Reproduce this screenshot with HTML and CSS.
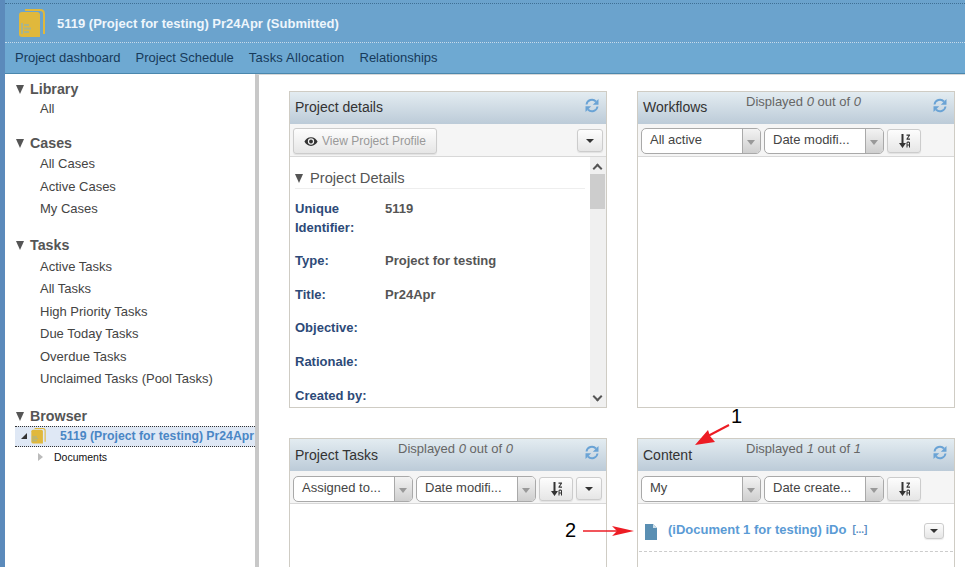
FILE: index.html
```html
<!DOCTYPE html>
<html lang="en">
<head>
  <meta charset="UTF-8">
  <title>5119 (Project for testing) Pr24Apr</title>
  <link rel="stylesheet" href="styles.css">
</head>
<body>
  <svg class="defs" width="0" height="0" aria-hidden="true">
    <symbol id="refresh" viewBox="0 0 14 15">
      <path d="M1.500 6.500A5.500 5.500 0 0 1 11 3.500" stroke="#6aa3d5" stroke-width="1.900" fill="none"/>
      <path d="M13.500 1V6.800H7.800Z" fill="#6aa3d5"/>
      <path d="M12.500 8.500A5.500 5.500 0 0 1 3 11.500" stroke="#6aa3d5" stroke-width="1.900" fill="none"/>
      <path d="M.5 14V8.200H6.200Z" fill="#6aa3d5"/>
    </symbol>
    <symbol id="sort" viewBox="0 0 11 14">
      <path d="M2.500 0H4.500V9H7L3.500 14L0 9H2.500Z" fill="#333"/>
      <path d="M7.500 .5H11V1.500L8.900 4.600H11V5.800H7.500V4.800L9.600 1.700H7.500ZM7.500 13.500V8.500L8.500 7.500H10L11 8.500V13.500H10V11.500H8.500V13.500ZM8.500 8.700V10.400H10V8.700Z" fill="#333"/>
    </symbol>
    <symbol id="project" viewBox="0 0 26 29">
      <path d="M6 1H21Q25 1 25 5V25" stroke="#e0b83c" stroke-width="2" fill="none"/>
      <path d="M3 3H18Q21 3 21 6V28H3Q0 28 0 25V6Q0 3 3 3Z" fill="#e0b83c"/>
      <path d="M2 14H4V25H2ZM5 15H10V17H5ZM5 18.500H12V20.500H5ZM5 22H10V24H5Z" fill="#a9b48c"/>
    </symbol>
  </svg>

  <header class="topbar">
    <div class="titlebar">
      <svg class="title-icon"><use href="#project"/></svg>
      <h1>5119 (Project for testing) Pr24Apr (Submitted)</h1>
    </div>
    <nav class="tabs">
      <a href="#">Project dashboard</a>
      <a href="#">Project Schedule</a>
      <a href="#" class="tab-wide">Tasks Allocation</a>
      <a href="#">Relationships</a>
    </nav>
  </header>

  <div class="layout">
    <aside class="sidebar">
      <section class="group">
        <h3><span class="caret"></span>Library</h3>
        <ul class="tight">
          <li>All</li>
        </ul>
      </section>
      <section class="group">
        <h3><span class="caret"></span>Cases</h3>
        <ul>
          <li>All Cases</li>
          <li>Active Cases</li>
          <li>My Cases</li>
        </ul>
      </section>
      <section class="group group-tasks">
        <h3><span class="caret"></span>Tasks</h3>
        <ul>
          <li>Active Tasks</li>
          <li>All Tasks</li>
          <li>High Priority Tasks</li>
          <li>Due Today Tasks</li>
          <li>Overdue Tasks</li>
          <li>Unclaimed Tasks (Pool Tasks)</li>
        </ul>
      </section>
      <section class="group browser">
        <h3><span class="caret"></span>Browser</h3>
        <div class="tree-selected">
          <span class="tree-open"></span>
          <svg class="tree-icon"><use href="#project"/></svg>
          <span class="tree-label">5119 (Project for testing) Pr24Apr</span>
        </div>
        <div class="tree-row">
          <span class="tree-closed"></span>
          <span>Documents</span>
        </div>
      </section>
    </aside>

    <main class="dashboard">
      <section class="panel">
        <div class="panel-head">
          <h2>Project details</h2>
          <svg class="refresh"><use href="#refresh"/></svg>
        </div>
        <div class="panel-tools">
          <button class="btn btn-view">
            <svg class="eye" viewBox="0 0 16 12"><path d="M8 1C4.500 1 1.800 3.300 .5 6C1.800 8.700 4.500 11 8 11S14.200 8.700 15.500 6C14.200 3.300 11.500 1 8 1ZM8 9.600A3.600 3.600 0 1 1 8 2.400A3.600 3.600 0 0 1 8 9.600Z" fill="#333"/><circle cx="8" cy="6" r="2.200" fill="#333"/></svg>
            View Project Profile
          </button>
          <button class="btn btn-menu push"><span class="down"></span></button>
        </div>
        <div class="details">
          <div class="details-body">
            <h4><span class="caret"></span>Project Details</h4>
            <dl>
              <dt class="first">Unique Identifier:</dt><dd class="first">5119</dd>
              <dt class="row">Type:</dt><dd class="row">Project for testing</dd>
              <dt class="row">Title:</dt><dd class="row">Pr24Apr</dd>
              <dt class="row">Objective:</dt><dd class="row"></dd>
              <dt class="row">Rationale:</dt><dd class="row"></dd>
              <dt>Created by:</dt><dd></dd>
            </dl>
          </div>
          <div class="scrollbar">
            <span class="arrow-up"></span>
            <span class="thumb"></span>
            <span class="arrow-down"></span>
          </div>
        </div>
      </section>

      <section class="panel">
        <div class="panel-head">
          <h2>Workflows</h2>
          <p class="count">Displayed <em>0</em> out of <em>0</em></p>
          <svg class="refresh"><use href="#refresh"/></svg>
        </div>
        <div class="panel-tools">
          <div class="select"><span>All active</span><i></i></div>
          <div class="select"><span>Date modifi...</span><i></i></div>
          <button class="btn btn-sort"><svg><use href="#sort"/></svg></button>
        </div>
      </section>

      <section class="panel">
        <div class="panel-head">
          <h2>Project Tasks</h2>
          <p class="count">Displayed <em>0</em> out of <em>0</em></p>
          <svg class="refresh"><use href="#refresh"/></svg>
        </div>
        <div class="panel-tools">
          <div class="select"><span>Assigned to...</span><i></i></div>
          <div class="select"><span>Date modifi...</span><i></i></div>
          <button class="btn btn-sort"><svg><use href="#sort"/></svg></button>
          <button class="btn btn-menu"><span class="down"></span></button>
        </div>
      </section>

      <section class="panel">
        <div class="panel-head">
          <h2>Content</h2>
          <p class="count">Displayed <em>1</em> out of <em>1</em></p>
          <svg class="refresh"><use href="#refresh"/></svg>
        </div>
        <div class="panel-tools">
          <div class="select"><span>My</span><i></i></div>
          <div class="select"><span>Date create...</span><i></i></div>
          <button class="btn btn-sort"><svg><use href="#sort"/></svg></button>
        </div>
        <div class="doc-row">
          <svg class="doc-icon" viewBox="0 0 12 16"><path d="M0 0H8L12 4V16H0Z" fill="#5a8fb3"/><path d="M8 0L12 4H8Z" fill="#cfe0ea"/></svg>
          <a href="#" class="doc-link">(iDocument 1 for testing) iDo</a>
          <a href="#" class="doc-more">[...]</a>
          <button class="btn doc-menu"><span class="down"></span></button>
        </div>
      </section>
    </main>
  </div>

  <!-- red annotation arrows drawn over the screenshot -->
  <span class="mark mark-1">1</span>
  <span class="mark mark-2">2</span>
  <svg class="arrows" width="965" height="567" viewBox="0 0 965 567">
    <path d="M729 425L708 436" stroke="#ed1c24" stroke-width="2" fill="none"/>
    <path d="M695 445L708 430L710 436L715 442Z" fill="#ed1c24"/>
    <path d="M583 531H620" stroke="#ed1c24" stroke-width="1.500" fill="none"/>
    <path d="M634 531L612 526L617 531L612 536Z" fill="#ed1c24"/>
  </svg>
</body>
</html>
```

FILE: styles.css
```css
/* page frame */
html, body {
  margin: 0;
  height: 567px;
  overflow: hidden;
}
body {
  position: relative;
  font-family: "Liberation Sans", Arial, sans-serif;
  font-size: 13px;
  color: #444;
  background: #fff;
  border-left: 5px solid #5b8abb;
}
.defs {
  position: absolute;
}

/* top bar */
.topbar {
  background: #6ba3cd;
  border-bottom: 1px solid #4a87ad;
  padding-top: 3px;
}
.titlebar {
  display: flex;
  align-items: center;
  height: 38px;
  border-top: 1px dotted #3f6f94;
  border-bottom: 1px dotted #c6dcec;
  padding-left: 14px;
}
.title-icon {
  width: 26px;
  height: 29px;
  margin-right: 12px;
}
.titlebar h1 {
  margin: 0;
  font-size: 13px;
  font-weight: bold;
  color: #eef6fc;
}
.tabs {
  display: flex;
  gap: 15px;
  padding: 6px 0 0 10px;
  height: 24px;
  background: #6ea9d2;
}
.tabs a {
  color: #173a5a;
  text-decoration: none;
  font-size: 13px;
  line-height: 17px;
}
.tabs .tab-wide {
  letter-spacing: .2px;
}

.layout {
  display: flex;
  height: 493px;
}

/* left navigation */
.sidebar {
  width: 250px;
  flex: none;
  padding: 7px 0 0 11px;
  box-sizing: border-box;
  overflow: hidden;
}
.group {
  padding-bottom: 16px;
}
.group h3 {
  margin: 0;
  font-size: 14.250px;
  line-height: 17px;
  font-weight: bold;
  color: #555;
}
.caret {
  display: inline-block;
  width: 0;
  height: 0;
  border-left: 4.500px solid transparent;
  border-right: 4.500px solid transparent;
  border-top: 9px solid #555;
  margin-right: 6px;
}
.group ul {
  list-style: none;
  margin: 1px 0 0;
  padding: 0 0 0 24px;
}
.group li {
  line-height: 22.500px;
  color: #444;
}
.group ul.tight {
  margin: 1px 0;
}
.group ul.tight li {
  line-height: 19px;
}
.group-tasks ul {
  margin-top: 2px;
}
.browser {
  padding: 1px 0 0;
}
.browser h3 {
  margin-bottom: 1px;
}
.tree-selected {
  display: flex;
  align-items: center;
  height: 19px;
  margin-left: -1px;
  background: #dfe8f5;
  border-top: 1px dotted #333;
  border-bottom: 1px dotted #333;
}
.tree-open {
  width: 0;
  height: 0;
  margin-left: 6px;
  border-bottom: 6px solid #333;
  border-left: 6px solid transparent;
}
.tree-icon {
  width: 15px;
  height: 16px;
  margin-left: 4px;
}
.tree-label {
  margin-left: 14px;
  font-size: 12.250px;
  font-weight: bold;
  color: #4a86c5;
  white-space: nowrap;
}
.tree-row {
  display: flex;
  align-items: center;
  height: 20px;
  font-size: 10.500px;
  color: #111;
  padding-left: 22px;
}
.tree-closed {
  width: 0;
  height: 0;
  margin-right: 11px;
  border-top: 4px solid transparent;
  border-bottom: 4px solid transparent;
  border-left: 5px solid #bbb;
}

/* dashboard */
.dashboard {
  flex: 1;
  border-left: 4px solid #c8c8c8;
  border-top: 1px solid #d8d8d8;
  padding: 16px 0 0 30px;
  display: grid;
  grid-template-columns: 318px 318px;
  grid-template-rows: 317px 317px;
  gap: 30px;
}
.panel {
  border: 1px solid #cfccc4;
  box-sizing: border-box;
  background: #fff;
  display: flex;
  flex-direction: column;
}
.panel-head {
  position: relative;
  display: flex;
  align-items: center;
  height: 32px;
  flex: none;
  padding: 0 5px;
  background: linear-gradient(#e3ecf1, #bccbd8);
  box-sizing: border-box;
}
.panel-head h2 {
  margin: -2px 0 0;
  font-size: 14px;
  font-weight: normal;
  color: #333;
}
.panel:nth-child(n+3) .panel-head h2 {
  margin-top: 0;
}
.count {
  position: absolute;
  top: 2px;
  left: 108px;
  margin: 0;
  font-size: 13px;
  color: #666;
}
.refresh {
  position: absolute;
  right: 7px;
  top: 6px;
  width: 14px;
  height: 15px;
}
.panel-tools {
  display: flex;
  align-items: flex-start;
  gap: 3px;
  height: 33px;
  flex: none;
  padding: 4px 3px 0;
  background: #f5f5f5;
  border-bottom: 1px solid #d8d8d8;
  box-sizing: border-box;
}
.panel:nth-child(n+3) .panel-tools {
  padding-top: 5px;
}
.push {
  margin-left: auto;
}
.btn {
  border: 1px solid #ccc;
  border-radius: 3px;
  background: linear-gradient(#fdfdfd, #e6e6e6);
  box-shadow: 0 1px 1px rgba(0, 0, 0, .08);
  padding: 0;
  font-family: inherit;
  display: flex;
  align-items: center;
  justify-content: center;
}
.btn-view {
  width: 144px;
  height: 26px;
  font-size: 12px;
  color: #999;
  gap: 4px;
}
.eye {
  width: 14px;
  height: 11px;
}
.btn-menu {
  width: 26px;
  height: 23px;
  margin-top: 1px;
}
.btn-sort {
  width: 34px;
  height: 24px;
  margin-top: 1px;
}
.btn-sort svg {
  width: 11px;
  height: 14px;
}
.down {
  width: 0;
  height: 0;
  border-left: 4.500px solid transparent;
  border-right: 4.500px solid transparent;
  border-top: 4.500px solid #333;
}
.select {
  display: flex;
  width: 120px;
  height: 26px;
  border: 1px solid #a9a9a9;
  border-radius: 5px;
  box-sizing: border-box;
  overflow: hidden;
  background: #fff;
}
.select span {
  flex: 1;
  padding-left: 8px;
  line-height: 21px;
  font-size: 13px;
  color: #444;
  white-space: nowrap;
}
.select i {
  position: relative;
  width: 17px;
  background: linear-gradient(#f3f3f3, #cfcfcf);
  border-left: 1px solid #a9a9a9;
}
.select i::after {
  content: "";
  position: absolute;
  left: 4px;
  top: 11px;
  border-left: 4px solid transparent;
  border-right: 4px solid transparent;
  border-top: 5px solid #999;
}

/* project details body */
.details {
  flex: 1;
  display: flex;
  min-height: 0;
}
.details-body {
  flex: 1;
  padding: 0 5px;
  overflow: hidden;
}
.details-body h4 {
  margin: 13px 0 0;
  padding-bottom: 1px;
  border-bottom: 1px solid #eee;
  font-size: 14.700px;
  line-height: 17px;
  font-weight: normal;
  color: #555;
}
.details-body h4 .caret {
  margin-right: 7px;
}
.details-body dl {
  display: grid;
  grid-template-columns: 90px 1fr;
  margin: 10px 0 0;
  font-size: 13px;
  font-weight: bold;
  line-height: 19px;
}
.details-body dt {
  color: #2d4a78;
}
.details-body dd {
  margin: 0;
  color: #555;
}
.details-body .first {
  margin-bottom: 14px;
}
.details-body .row {
  margin-bottom: 14.700px;
}
.scrollbar {
  width: 16px;
  flex: none;
  background: #f0f0f0;
  position: relative;
}
.thumb {
  position: absolute;
  top: 17px;
  left: 0;
  width: 15px;
  height: 35px;
  background: #cdcdcd;
}
.arrow-up,
.arrow-down {
  position: absolute;
  left: 4px;
  width: 5px;
  height: 5px;
  border-left: 2px solid #555;
  border-top: 2px solid #555;
  transform: rotate(45deg);
  top: 8px;
}
.arrow-down {
  top: auto;
  bottom: 7px;
  transform: rotate(225deg);
}

/* content list */
.doc-row {
  display: flex;
  align-items: center;
  margin: 0 1px;
  height: 43px;
  padding: 4px 0 0 6px;
  border-bottom: 1px dashed #ccc;
}
.doc-icon {
  width: 12px;
  height: 16px;
  margin: 5px 11px 0 0;
}
.doc-link {
  font-size: 13px;
  font-weight: bold;
  color: #5a9bd5;
  text-decoration: none;
}
.doc-more {
  margin-left: 6px;
  font-size: 10px;
  font-weight: bold;
  color: #5a8fc5;
  text-decoration: none;
}
.doc-menu {
  width: 20px;
  height: 16px;
  margin: 3px 9px 0 auto;
}

/* annotations */
.mark {
  position: absolute;
  font-size: 20px;
  line-height: 20px;
  color: #000;
}
.mark-1 {
  left: 726px;
  top: 406px;
}
.mark-2 {
  left: 560px;
  top: 520px;
}
.arrows {
  position: absolute;
  left: -5px;
  top: 0;
  pointer-events: none;
}
```
